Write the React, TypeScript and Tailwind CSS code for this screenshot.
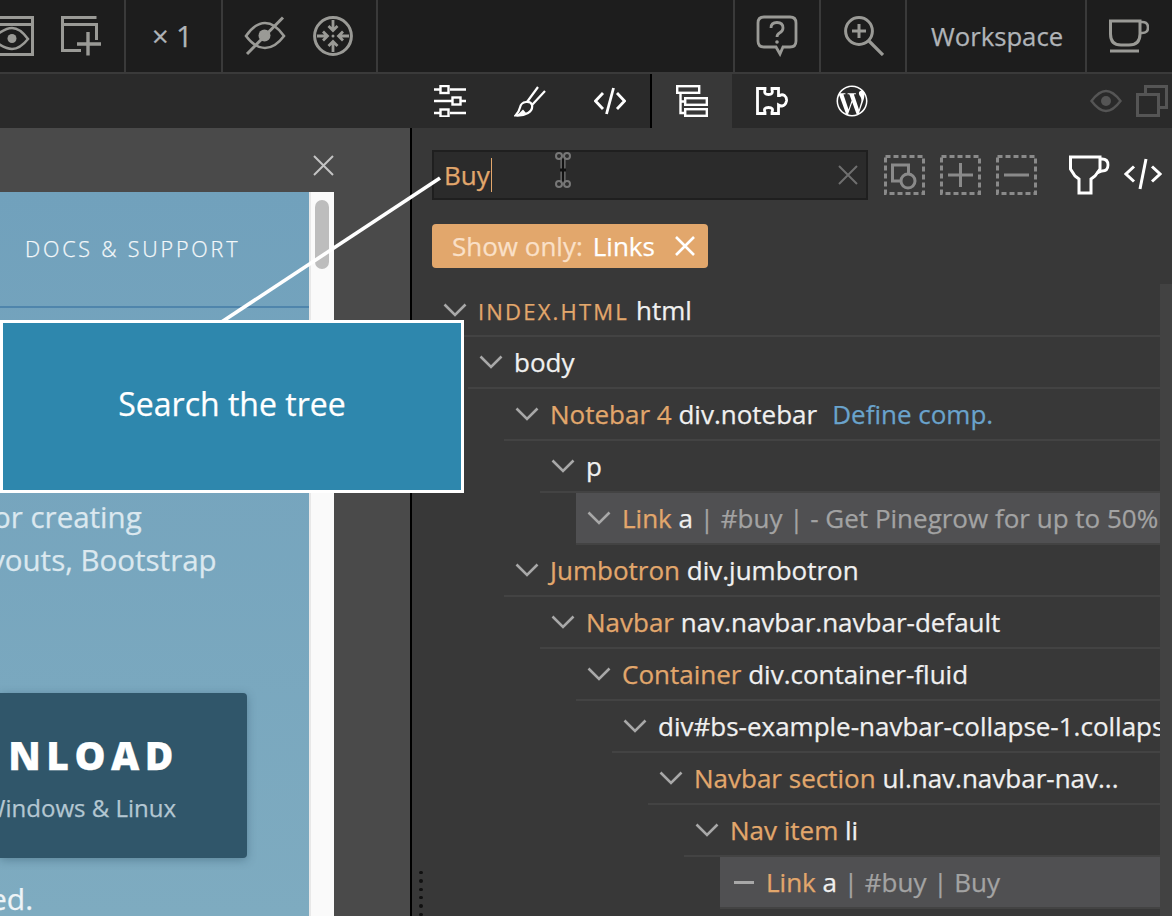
import React from "react";
import { FaWordpressSimple } from "react-icons/fa";

const G = "#9a9a96";

function Svg({ w, h, children, className = "" }: { w: number; h: number; children: React.ReactNode; className?: string }) {
  return (
    <svg width={w} height={h} viewBox={`0 0 ${w} ${h}`} fill="none" className={"block shrink-0 " + className}>
      {children}
    </svg>
  );
}

const WindowEye = () => (
  <Svg w={34} h={40}>
    <path d="M-8 1.5H32.5V38.5H-8M-8 8.5H32.5" stroke={G} strokeWidth="3" />
    <path d="M-8 23Q4 12 12 12T28 23Q20 33 12 33T-8 23Z" stroke={G} strokeWidth="2.5" />
    <circle cx="12" cy="22.5" r="4.5" fill={G} />
  </Svg>
);
const WindowPlus = () => (
  <Svg w={41} h={40}>
    <path d="M31 1.5H1.5V34.5H20M1.5 8.5H35.5V24M35.5 1.5H31" stroke={G} strokeWidth="3" />
    <path d="M27 16V39.5M16 28H40" stroke={G} strokeWidth="3.4" />
  </Svg>
);
const EyeOff = () => (
  <Svg w={42} h={40}>
    <path d="M2 20Q11 7 21 7T40 20Q31 32 21 32T2 20Z" stroke={G} strokeWidth="2.6" />
    <circle cx="20.5" cy="19.5" r="6" fill={G} />
    <path d="M3 38L39 1.5" stroke={G} strokeWidth="3" />
  </Svg>
);
const Compress = () => (
  <Svg w={40} h={40}>
    <circle cx="20" cy="20" r="18.4" stroke={G} strokeWidth="3" />
    <path d="M20 4V14M15.5 10L20 14.5L24.5 10M20 36V26M15.5 30L20 25.5L24.5 30M4 20H14M10 15.5L14.5 20L10 24.5M36 20H26M30 15.5L25.5 20L30 24.5" stroke={G} strokeWidth="2.8" />
    <circle cx="20" cy="20" r="1.5" fill={G} />
  </Svg>
);
const Help = () => (
  <Svg w={42} h={42}>
    <path d="M8 2H34Q40 2 40 8V26Q40 32 34 32H27L24 39L20 32H8Q2 32 2 26V8Q2 2 8 2Z" stroke={G} strokeWidth="2.8" />
    <path d="M15 13Q15 7.5 21 7.5T27 13Q27 16 23.5 18Q21 19.5 21 22" stroke={G} strokeWidth="2.8" />
    <circle cx="21" cy="27" r="1.8" fill={G} />
  </Svg>
);
const ZoomIn = () => (
  <Svg w={40} h={40}>
    <circle cx="15" cy="15" r="13.4" stroke={G} strokeWidth="3" />
    <path d="M8 15H22M15 8V22" stroke={G} strokeWidth="3" />
    <path d="M25 25L39 39" stroke={G} strokeWidth="3.2" />
  </Svg>
);
const Cup = () => (
  <Svg w={40} h={34}>
    <path d="M1.5 2H31V15Q31 26 20 26H12Q1.5 26 1.5 15Z" stroke={G} strokeWidth="3" />
    <path d="M31 3H33Q39 3 39 8.5T33 14H31" stroke={G} strokeWidth="2.6" />
    <path d="M1 32H30" stroke={G} strokeWidth="3" />
  </Svg>
);
const Sliders = () => (
  <Svg w={32} h={32}>
    <path d="M0 4.5H6M16 4.5H32M0 16H18M27 16H32M0 28H6M16 28H32" stroke="#fff" strokeWidth="2.6" />
    <rect x="6.5" y="1" width="8" height="7" stroke="#fff" strokeWidth="2.4" />
    <rect x="18.5" y="12.5" width="8" height="7" stroke="#fff" strokeWidth="2.4" />
    <rect x="6.5" y="24.5" width="8" height="7" stroke="#fff" strokeWidth="2.4" />
  </Svg>
);
const Brush = () => (
  <Svg w={32} h={32}>
    <path d="M13 17L24 2M18 20L31 6" stroke="#fff" strokeWidth="2.2" />
    <path d="M1.5 30.5Q5 27 6 22.5Q7 17.5 12 17Q17 16.5 18 20Q19 25 14 28Q9 31 1.5 30.5Z" stroke="#fff" strokeWidth="2.2" />
    <path d="M2 30.5Q6 28 9 24.5L12 28Q8 31 2 30.5Z" fill="#fff" />
  </Svg>
);
const CodeIcon = () => (
  <Svg w={32} h={32}>
    <path d="M9 8L1.5 16L9 24M23 8L30.5 16L23 24" stroke="#fff" strokeWidth="2.8" />
    <path d="M19.5 3L12.5 29" stroke="#fff" strokeWidth="2.8" />
  </Svg>
);
const CodeIconLarge = () => (
  <Svg w={38} h={32}>
    <path d="M10 8.5L2 16L10 23.5M28 8.5L36 16L28 23.5" stroke="#fff" strokeWidth="3" />
    <path d="M22 1L16 31" stroke="#fff" strokeWidth="3" />
  </Svg>
);
const TreeIcon = () => (
  <Svg w={32} h={32}>
    <rect x="1.2" y="1.2" width="22" height="6.6" stroke="#fff" strokeWidth="2.4" />
    <rect x="9.2" y="13.2" width="21.6" height="6.6" stroke="#fff" strokeWidth="2.4" />
    <rect x="9.2" y="24.2" width="21.6" height="6.6" stroke="#fff" strokeWidth="2.4" />
    <path d="M4.5 8V28H9M4.5 16.5H9" stroke="#fff" strokeWidth="2.4" />
  </Svg>
);
const PuzzleIcon = () => (
  <Svg w={32} h={28}>
    <path d="M1.5 1.5H9V3Q7.5 7.5 12.5 7.5T16 3V1.5H22.5V8.5H24Q26 7 28.5 8.5Q31 10.5 30.5 14Q29.5 18.5 26 19Q24 19 22.5 18V26.5H16V25Q18 20.5 12.5 20.5T9 25V26.5H1.5Z" stroke="#fff" strokeWidth="2.8" />
  </Svg>
);
const EyeDim = () => (
  <Svg w={32} h={24}>
    <path d="M1.5 12Q9 2 16 2T30.5 12Q23 22 16 22T1.5 12Z" stroke="#555" strokeWidth="2.4" />
    <circle cx="16" cy="12" r="5" fill="#555" />
  </Svg>
);
const CopyDim = () => (
  <Svg w={32} h={32}>
    <rect x="1.5" y="9.5" width="21" height="21" stroke="#555" strokeWidth="3" />
    <path d="M9.5 9.5V1.5H30.5V22.5H22.5" stroke="#555" strokeWidth="3" />
  </Svg>
);
const Dashed = ({ children }: { children: React.ReactNode }) => (
  <Svg w={41} h={40}>
    <rect x="1.5" y="1.5" width="38" height="37" stroke="#8a8a8a" strokeWidth="3" strokeDasharray="5 3" />
    {children}
  </Svg>
);
const Trophy = () => (
  <Svg w={41} h={40}>
    <path d="M1.5 2H31V14L26 21L22 24V38H10V24L6 21L1.5 14Z" stroke="#fff" strokeWidth="3" />
    <path d="M31 4H33Q39 4 39 10T33 16L28 18" stroke="#fff" strokeWidth="2.8" />
  </Svg>
);
const IBeam = () => (
  <Svg w={20} h={36}>
    <path d="M10 5V31" stroke="#777" strokeWidth="5" />
    <path d="M10 5V31" stroke="#111" strokeWidth="2.4" />
    <circle cx="6" cy="4" r="3" stroke="#777" strokeWidth="2" />
    <circle cx="14" cy="4" r="3" stroke="#777" strokeWidth="2" />
    <circle cx="6" cy="32" r="3" stroke="#777" strokeWidth="2" />
    <circle cx="14" cy="32" r="3" stroke="#777" strokeWidth="2" />
    <path d="M7 18H13" stroke="#111" strokeWidth="3" />
  </Svg>
);
const Cross = ({ size, color, sw = 2 }: { size: number; color: string; sw?: number }) => (
  <Svg w={size} h={size}>
    <path d={`M1 1L${size - 1} ${size - 1}M${size - 1} 1L1 ${size - 1}`} stroke={color} strokeWidth={sw} />
  </Svg>
);
const Chevron = () => (
  <Svg w={24} h={14}>
    <path d="M1.5 1.5L12 12L22.5 1.5" stroke="#a8a8a8" strokeWidth="2.6" />
  </Svg>
);

function Cell({ w, children, last }: { w: string; children: React.ReactNode; last?: boolean }) {
  return <div className={`${w} h-full flex items-center shrink-0 ${last ? "" : "border-r-2 border-[#3a3a3a]"}`}>{children}</div>;
}

const O = "text-[#e2a76c]";
const W = "text-[#f0f0f0]";
const M = "text-[#a3a3a3]";

type Row = { ml: string; hl?: boolean; dash?: boolean; body: React.ReactNode };
const rows: Row[] = [
  { ml: "ml-0", body: <><span className={`${O} text-[22px] tracking-[2.2px] mr-[7px]`}>INDEX.HTML</span><span className={W}>html</span></> },
  { ml: "ml-[36px]", body: <span className={W}>body</span> },
  { ml: "ml-[72px]", body: <><span className={O}>Notebar 4</span> <span className={W}>div.notebar</span><span className="text-[#6aa3cc] ml-[15px]">Define comp.</span></> },
  { ml: "ml-[108px]", body: <span className={W}>p</span> },
  { ml: "ml-[144px]", hl: true, body: <><span className={O}>Link</span> <span className={W}>a</span> <span className={M}>| #buy | - Get Pinegrow for up to 50%</span></> },
  { ml: "ml-[72px]", body: <><span className={O}>Jumbotron</span> <span className={W}>div.jumbotron</span></> },
  { ml: "ml-[108px]", body: <><span className={O}>Navbar</span> <span className={W}>nav.navbar.navbar-default</span></> },
  { ml: "ml-[144px]", body: <><span className={O}>Container</span> <span className={W}>div.container-fluid</span></> },
  { ml: "ml-[180px]", body: <span className={W}>div#bs-example-navbar-collapse-1.collapse.navbar-collapse</span> },
  { ml: "ml-[216px]", body: <><span className={O}>Navbar section</span> <span className={W}>ul.nav.navbar-nav...</span></> },
  { ml: "ml-[252px]", body: <><span className={O}>Nav item</span> <span className={W}>li</span></> },
  { ml: "ml-[288px]", hl: true, dash: true, body: <><span className={O}>Link</span> <span className={W}>a</span> <span className={M}>| #buy | Buy</span></> },
];

export default function App() {
  return (
    <div className="relative w-[1172px] h-[916px] overflow-hidden flex flex-col bg-[#383838] font-['Open_Sans',sans-serif] [-webkit-text-stroke:0.25px]">
      {/* top bar */}
      <div className="h-[74px] shrink-0 flex bg-[#1d1d1d] border-b-2 border-[#3a3a3a] text-[#b0b4b8]">
        <Cell w="w-[126px]">
          <WindowEye />
          <div className="ml-[27px]"><WindowPlus /></div>
        </Cell>
        <Cell w="w-[97px]">
          <span className="ml-[26px] -mt-[1px] text-[29px] leading-none">× 1</span>
        </Cell>
        <Cell w="w-[155px]">
          <div className="ml-[21px]"><EyeOff /></div>
          <div className="ml-[27px]"><Compress /></div>
        </Cell>
        <div className="flex-1 border-r-2 border-[#3a3a3a]" />
        <Cell w="w-[86px]"><div className="ml-[21px]"><Help /></div></Cell>
        <Cell w="w-[86px]"><div className="ml-[23px]"><ZoomIn /></div></Cell>
        <Cell w="w-[180px]"><span className="ml-[24px] mt-[2px] text-[25.7px] leading-none">Workspace</span></Cell>
        <Cell w="w-[85px]" last><div className="ml-[22px]"><Cup /></div></Cell>
      </div>
      {/* tab bar */}
      <div className="h-[54px] shrink-0 flex bg-[#2a2a2a]">
        <div className="w-[410px] shrink-0" />
        <div className="w-[240px] shrink-0 flex items-center pl-[24px] gap-[48px]">
          <Sliders />
          <Brush />
          <CodeIcon />
        </div>
        <div className="w-[2px] shrink-0 bg-black" />
        <div className="w-[80px] shrink-0 bg-[#383838] flex items-center justify-center">
          <TreeIcon />
        </div>
        <div className="flex items-center pl-[24px] gap-[48px]">
          <PuzzleIcon />
          <FaWordpressSimple className="text-white text-[32px]" />
        </div>
        <div className="ml-auto flex items-center gap-[14px] pr-[4px]">
          <EyeDim />
          <CopyDim />
        </div>
      </div>
      {/* main */}
      <div className="flex-1 min-h-0 flex">
        {/* preview */}
        <div className="w-[412px] shrink-0 bg-[#4a4a4a] border-r-2 border-black flex flex-col">
          <div className="h-[64px] shrink-0 w-[334px] flex justify-end pt-[27px]">
            <Cross size={21} color="#c4c4c4" />
          </div>
          <div className="flex-1 min-h-0 w-[334px] flex">
            <div className="w-[309px] bg-gradient-to-b from-[#71a1bc] to-[#7eabc0] overflow-hidden flex flex-col">
              <div className="h-[116px] border-b-2 border-[#4f85ac] pt-[43px] pl-[25px] shrink-0">
                <div className="text-[21.5px] leading-[28px] tracking-[2.8px] text-[#f4f8fa] font-light whitespace-nowrap">DOCS &amp; SUPPORT</div>
              </div>
              <div className="mt-[187px] text-[29.5px] leading-[43px] text-[#dbe8ef] whitespace-nowrap">
                <div className="-ml-[7px]">or creating</div>
                <div className="-ml-[10px]">youts, Bootstrap</div>
              </div>
              <div className="mt-[112px] w-[247px] h-[165px] bg-[#30566a] rounded-r-[4px] shadow-[0_2px_10px_rgba(30,60,80,0.35)] flex flex-col items-end pr-[71px] shrink-0">
                <div className="mt-[38px] text-[39px] leading-[48px] font-extrabold tracking-[5.5px] text-white whitespace-nowrap -mr-[3px]">NLOAD</div>
                <div className="mt-[13px] text-[24px] leading-[32px] text-[#b4c7d2] whitespace-nowrap mr-0">Windows &amp; Linux</div>
              </div>
              <div className="mt-[21px] -ml-[10px] text-[30px] leading-[40px] text-[#eef4f7]">ed.</div>
            </div>
            <div className="w-[25px] bg-[#fafafa] border-l-2 border-[#e8e8e8] pl-[4px] pt-[8px]">
              <div className="w-[14px] h-[69px] rounded-full bg-[#bdbdbd]" />
            </div>
          </div>
        </div>
        {/* panel */}
        <div className="flex-1 min-w-0 flex flex-col pt-[22px] relative">
          <div className="flex items-center pl-[20px]">
            <div className="w-[436px] h-[50px] bg-[#2b2b2b] border-2 border-[#1f1f1f] flex items-center pl-[10px] pr-[8px]">
              <span className="text-[26px] leading-none text-[#e2a76c]">Buy</span>
              <span className="ml-[1px] w-[1.5px] h-[34px] bg-[#e2a76c]" />
              <span className="ml-auto"><Cross size={20} color="#6f6f6f" /></span>
            </div>
            <div className="ml-[16px] flex items-center gap-[15px]">
              <Dashed>
                <rect x="8.5" y="10" width="16" height="16" stroke="#8a8a8a" strokeWidth="3" />
                <circle cx="24" cy="26" r="7" fill="#383838" stroke="#8a8a8a" strokeWidth="3" />
              </Dashed>
              <Dashed><path d="M20.5 8V32M8 20H33" stroke="#8a8a8a" strokeWidth="3" /></Dashed>
              <Dashed><path d="M8 20H33" stroke="#8a8a8a" strokeWidth="3" /></Dashed>
            </div>
            <div className="ml-[32px]"><Trophy /></div>
            <div className="ml-[14px] -mt-[2px]"><CodeIconLarge /></div>
          </div>
          <div className="ml-[20px] mt-[24px] w-[276px] h-[44px] rounded-[4px] bg-[#e2a76c] flex items-center pl-[20px] text-[26px] leading-none whitespace-nowrap">
            <span className="text-[#fae0c8]">Show only:</span>
            <span className="text-white ml-[10px]">Links</span>
            <span className="ml-[20px]"><Cross size={20} color="#fff" sw={2.6} /></span>
          </div>
          <div className="mt-[17px] flex flex-col overflow-hidden pl-[20px] w-[748px] flex-1 min-h-0">
            {rows.map((r, i) => (
              <div key={i} className={`${r.ml} h-[52px] shrink-0 flex items-center border-b-2 border-[#434343] text-[26px] leading-none whitespace-nowrap overflow-hidden ${r.hl ? "bg-[#505052]" : ""}`}>
                <div className="w-[46px] shrink-0 pl-[11px]">
                  {r.dash ? <div className="w-[20px] h-[3px] bg-[#a8a8a8] ml-[3px]" /> : <Chevron />}
                </div>
                <div className="whitespace-pre">{r.body}</div>
              </div>
            ))}
          </div>
          <div className="absolute right-0 top-[156px] bottom-0 w-[12px] bg-[#424242]" />
          <div className="absolute left-[7px] bottom-0 h-[46px] flex flex-col gap-[5px] pt-[1px]">
            {[0, 1, 2, 3, 4, 5].map((d) => (
              <div key={d} className="w-[4px] h-[4px] rounded-full bg-[#111]" />
            ))}
          </div>
          <div className="absolute left-[141px] top-[24px]"><IBeam /></div>
        </div>
      </div>
      {/* callout */}
      <svg className="absolute left-0 top-0 pointer-events-none" width="1172" height="916" fill="none">
        <path d="M220 323L440 178" stroke="#fff" strokeWidth="3.6" />
      </svg>
      <div className="absolute left-0 top-[320px] w-[464px] h-[173px] bg-[#2e87ad] border-[3px] border-white flex items-center justify-center pb-[6px] text-[32px] text-white">
        Search the tree
      </div>
    </div>
  );
}
